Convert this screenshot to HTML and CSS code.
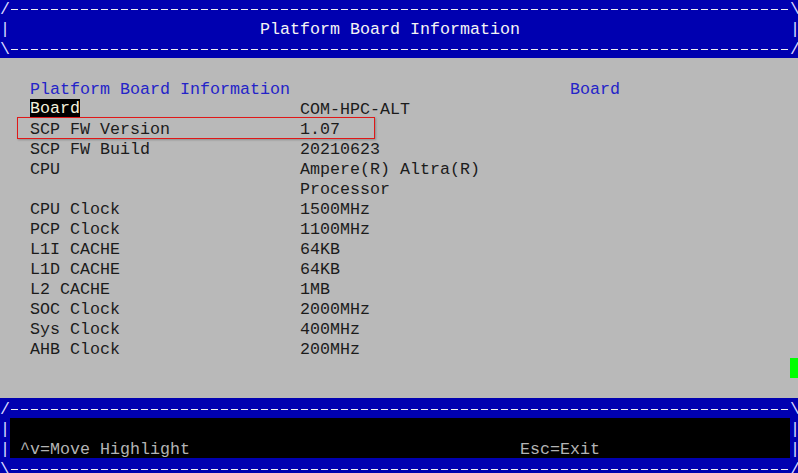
FILE: index.html
```html
<!DOCTYPE html>
<html lang="en">
<head>
<meta charset="utf-8">
<title>Platform Board Information</title>
<link rel="stylesheet" href="styles.css">
</head>
<body>
<div class="screen">
  <header class="banner">
    <div class="rule"><span class="ch">/</span><span class="dash"></span><span class="ch">\</span></div>
    <div class="title-row"><span class="ch">|</span><h1 class="title">Platform Board Information</h1><span class="ch">|</span></div>
    <div class="rule"><span class="ch">\</span><span class="dash"></span><span class="ch">/</span></div>
  </header>

  <main class="content">
    <div class="heading-row">
      <h2 class="heading">Platform Board Information</h2>
      <span class="help-title">Board</span>
    </div>
    <dl class="info">
      <dt><span class="selected">Board</span></dt><dd>COM-HPC-ALT</dd>
      <dt>SCP FW Version</dt><dd>1.07</dd>
      <dt>SCP FW Build</dt><dd>20210623</dd>
      <dt>CPU</dt><dd>Ampere(R) Altra(R)<br>Processor</dd>
      <dt>CPU Clock</dt><dd>1500MHz</dd>
      <dt>PCP Clock</dt><dd>1100MHz</dd>
      <dt>L1I CACHE</dt><dd>64KB</dd>
      <dt>L1D CACHE</dt><dd>64KB</dd>
      <dt>L2 CACHE</dt><dd>1MB</dd>
      <dt>SOC Clock</dt><dd>2000MHz</dd>
      <dt>Sys Clock</dt><dd>400MHz</dd>
      <dt>AHB Clock</dt><dd>200MHz</dd>
    </dl>
    <div class="mark"></div>
    <div class="scroll-thumb"></div>
  </main>

  <footer class="banner footer">
    <div class="rule"><span class="ch">/</span><span class="dash"></span><span class="ch">\</span></div>
    <div class="panel-row">
      <div class="side"><span class="ch">|</span><span class="ch">|</span></div>
      <div class="panel">
        <div class="panel-line"></div>
        <div class="panel-line keys">
          <span class="key-left">^v=Move Highlight</span>
          <span class="key-right">Esc=Exit</span>
        </div>
      </div>
      <div class="side"><span class="ch">|</span><span class="ch">|</span></div>
    </div>
    <div class="rule"><span class="ch">\</span><span class="dash"></span><span class="ch">/</span></div>
  </footer>
</div>
</body>
</html>
```

FILE: styles.css
```css
html, body {
  margin: 0;
  padding: 0;
  overflow: hidden;
  background: #b9b9b9;
}

.screen {
  width: 800px;
  margin-top: -2px;
  font-family: "Liberation Mono", "DejaVu Sans Mono", monospace;
  font-size: 16.667px;
  line-height: 20px;
  color: #1c1c1c;
}

.banner {
  background: #0000b0;
  color: #f4f4f4;
}

.rule, .title-row {
  display: flex;
  height: 20px;
}

.ch {
  display: block;
  box-sizing: border-box;
  width: 10px;
  height: 20px;
  padding-top: 2px;
  text-align: center;
  color: #d8d8ff;
}

.dash {
  flex: 1;
  height: 20px;
  background-image: repeating-linear-gradient(to right, #f0f0f0 0, #f0f0f0 7px, transparent 7px, transparent 10px);
  background-size: 100% 1px;
  background-repeat: no-repeat;
  background-position: 1px 11px;
}

.title {
  flex: 1;
  box-sizing: border-box;
  height: 20px;
  margin: 0;
  padding: 2px 0 0 250px;
  font: inherit;
  color: #f4f4f4;
  white-space: pre;
}

.content {
  position: relative;
  height: 340px;
  padding-top: 22px;
  box-sizing: border-box;
}

.heading-row {
  display: grid;
  grid-template-columns: 540px auto;
  padding-left: 30px;
  height: 20px;
}

.heading {
  margin: 0;
  font: inherit;
  color: #2424c8;
  white-space: pre;
}

.help-title {
  color: #2424c8;
}

.info {
  display: grid;
  grid-template-columns: 270px auto;
  margin: 0;
  padding-left: 30px;
  white-space: pre;
}

.info dt, .info dd {
  margin: 0;
}

.selected {
  display: inline-block;
  vertical-align: top;
  height: 19px;
  margin-top: -1px;
  background: #000;
  color: #f2f0dc;
}

.mark {
  position: absolute;
  left: 17px;
  top: 59px;
  width: 356px;
  height: 20px;
  border: 1px solid #e01818;
  box-shadow: 1px 1px 2px rgba(0, 0, 0, 0.25);
}

.scroll-thumb {
  position: absolute;
  left: 790px;
  top: 300px;
  width: 10px;
  height: 20px;
  background: #00ff00;
}

.panel-row {
  display: flex;
  height: 40px;
}

.side {
  display: flex;
  flex-direction: column;
  width: 10px;
}

.panel {
  flex: 1;
  background: #000;
  color: #b4b4b4;
}

.panel-line {
  box-sizing: border-box;
  height: 20px;
  display: flex;
  white-space: pre;
}

.keys {
  padding-top: 2px;
}

.key-left {
  padding-left: 10px;
  width: 500px;
}
```
